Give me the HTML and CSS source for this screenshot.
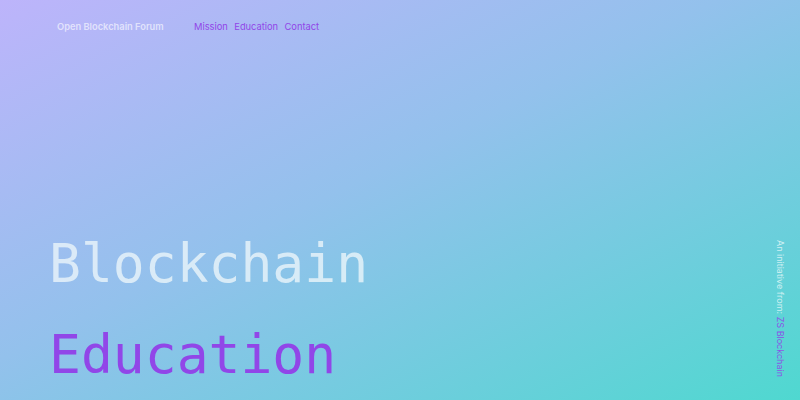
FILE: index.html
```
<!DOCTYPE html>
<html lang="en">
<head>
<meta charset="utf-8">
<title>Open Blockchain Forum</title>
<link rel="stylesheet" href="styles.css">
</head>
<body>
<div class="page">
  <header class="nav">
    <span class="brand">Open Blockchain Forum</span>
    <nav class="links">
      <a href="#">Mission</a>
      <a href="#">Education</a>
      <a href="#">Contact</a>
    </nav>
  </header>
  <main class="hero">
    <h1 class="title">
      <span class="line light">Blockchain</span>
      <span class="line accent">Education</span>
    </h1>
  </main>
  <aside class="side">An initiative from: <span class="accent">ZS Blockchain</span></aside>
</div>
</body>
</html>
```
FILE: styles.css
```
html, body {
  margin: 0;
  padding: 0;
  height: 100%;
}
body {
  font-family: Inter, "Noto Sans", sans-serif;
}
.page {
  position: relative;
  width: 800px;
  height: 400px;
  overflow: hidden;
  background: linear-gradient(to bottom right, #bdb4fb 0%, #93c1ec 45%, #4fd8d0 100%);
  display: flex;
  flex-direction: column;
}
.nav {
  display: flex;
  align-items: center;
  padding: 19px 0 0 57px;
  height: 14px;
  font-size: 9.3px;
}
.brand {
  font-weight: 600;
  color: rgba(255, 255, 255, 0.62);
  width: 137px;
}
.links {
  display: flex;
  gap: 6.5px;
}
.links a {
  color: #9146e8;
  text-decoration: none;
}
.hero {
  flex: 1;
  display: flex;
  align-items: flex-end;
  padding: 0 0 0 49px;
}
.title {
  margin: 0;
  font-family: "DejaVu Sans Mono", monospace;
  font-weight: 400;
  font-size: 53px;
  line-height: 91px;
}
.line {
  display: block;
}
.light {
  color: rgba(235, 245, 250, 0.8);
}
.accent {
  color: #9146e8;
}
.side {
  position: absolute;
  right: 14px;
  top: 240px;
  writing-mode: vertical-rl;
  font-size: 9px;
  color: rgba(255, 255, 255, 0.7);
}
.side .accent {
  color: #8a55e6;
}
```
